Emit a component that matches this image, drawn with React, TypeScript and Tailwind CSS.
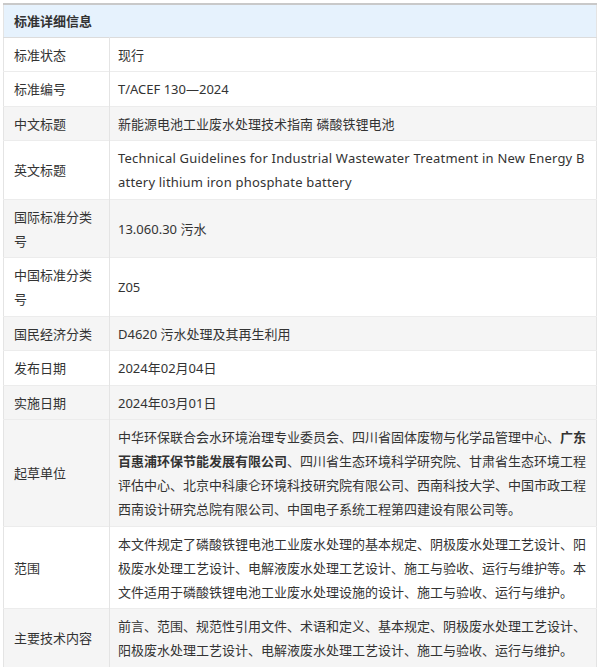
const rows: { label: string; value: React.ReactNode; gray?: boolean; latin?: boolean }[] = [
  { label: "标准状态", value: "现行" },
  { label: "标准编号", value: "T/ACEF 130—2024" },
  { label: "中文标题", value: "新能源电池工业废水处理技术指南 磷酸铁锂电池", gray: true },
  {
    label: "英文标题",
    latin: true,
    value:
      "Technical Guidelines for Industrial Wastewater Treatment in New Energy Battery lithium iron phosphate battery",
  },
  { label: "国际标准分类号", value: "13.060.30 污水", gray: true },
  { label: "中国标准分类号", value: "Z05" },
  { label: "国民经济分类", value: "D4620 污水处理及其再生利用", gray: true },
  { label: "发布日期", value: "2024年02月04日" },
  { label: "实施日期", value: "2024年03月01日", gray: true },
  {
    label: "起草单位",
    gray: true,
    value: (
      <>
        中华环保联合会水环境治理专业委员会、四川省固体废物与化学品管理中心、
        <b className="font-bold">广东百惠浦环保节能发展有限公司</b>
        、四川省生态环境科学研究院、甘肃省生态环境工程评估中心、北京中科康仑环境科技研究院有限公司、西南科技大学、中国市政工程西南设计研究总院有限公司、中国电子系统工程第四建设有限公司等。
      </>
    ),
  },
  {
    label: "范围",
    value:
      "本文件规定了磷酸铁锂电池工业废水处理的基本规定、阴极废水处理工艺设计、阳极废水处理工艺设计、电解液废水处理工艺设计、施工与验收、运行与维护等。本文件适用于磷酸铁锂电池工业废水处理设施的设计、施工与验收、运行与维护。",
  },
  {
    label: "主要技术内容",
    gray: true,
    value:
      "前言、范围、规范性引用文件、术语和定义、基本规定、阴极废水处理工艺设计、阳极废水处理工艺设计、电解液废水处理工艺设计、施工与验收、运行与维护。",
  },
];

export default function App() {
  return (
    <div
      className="bg-white px-[3px] pt-[3px] text-[13px] leading-6 text-[#333]"
      style={{ fontFamily: '"Noto Sans", "Noto Sans CJK SC", sans-serif' }}
    >
      <table className="w-full border-collapse border-t-2 border-t-[#c9c9c9] border-x border-x-[#e4e4e4]">
        <thead>
          <tr className="bg-[#e6f2fd] border-b border-[#dcdcdc]">
            <th colSpan={2} className="h-[33px] pl-[10px] text-left font-bold">
              标准详细信息
            </th>
          </tr>
        </thead>
        <tbody>
          {rows.map((r) => (
            <tr
              key={r.label}
              className={`border-b border-[#ececec] ${r.gray ? "bg-[#f5f5f5]" : "bg-white"}`}
            >
              <td className="w-[106px] border-r border-[#e4e4e4] pt-[5px] pb-[4.5px] pl-[10px] pr-[10px] align-middle">
                {r.label}
              </td>
              <td
                className={`pt-[5px] pb-[4.5px] pl-[8px] pr-[5px] align-middle break-all ${
                  r.latin ? "tracking-[0.2px]" : ""
                }`}
              >
                {r.value}
              </td>
            </tr>
          ))}
        </tbody>
      </table>
    </div>
  );
}
